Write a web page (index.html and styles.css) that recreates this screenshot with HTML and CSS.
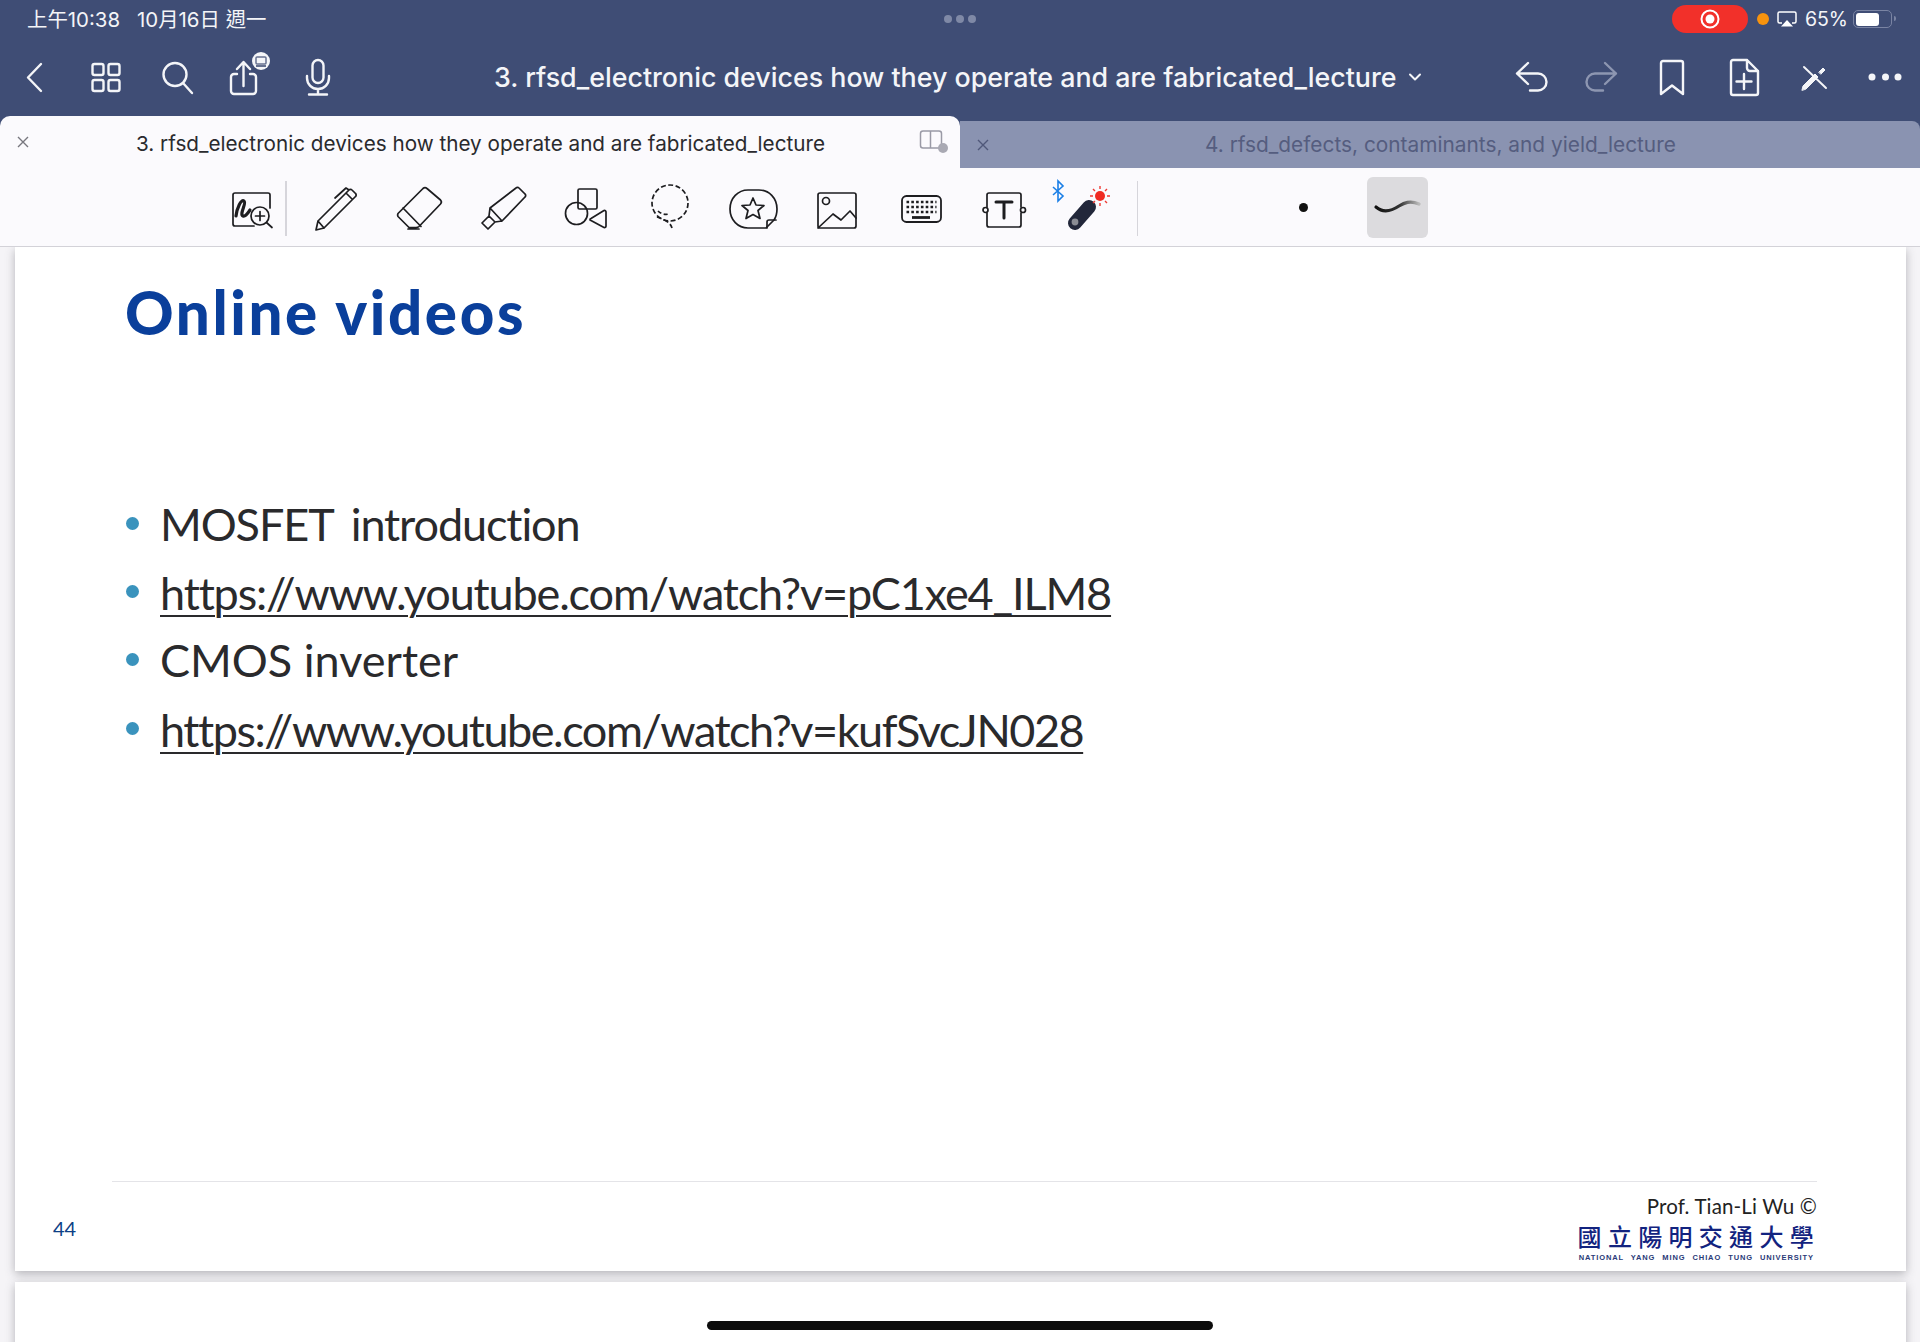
FILE: index.html
```html
<!DOCTYPE html>
<html lang="zh-Hant">
<head>
<meta charset="utf-8">
<title>rfsd lecture</title>
<link rel="stylesheet" href="styles.css">
</head>
<body>
<div class="app">
  <header class="top">
    <div class="status">
      <div class="status-time"><span>上午10:38</span><span>10月16日 週一</span></div>
      <div class="status-dots"><i></i><i></i><i></i></div>
      <div class="status-right">
        <div class="rec"><svg width="22" height="22" viewBox="0 0 22 22"><circle cx="11" cy="11" r="8.5" fill="none" stroke="#fff" stroke-width="2"/><circle cx="11" cy="11" r="4.5" fill="#fff"/></svg></div>
        <i class="orange"></i>
        <svg class="airplay" width="20" height="18" viewBox="0 0 20 18"><path d="M5 13H2.500A1.500 1.500 0 0 1 1 11.500V3.500A1.500 1.500 0 0 1 2.500 2h15A1.500 1.500 0 0 1 19 3.500v8a1.500 1.500 0 0 1-1.500 1.500H15" fill="none" stroke="#fff" stroke-width="1.500"/><path d="M10 10l6 6.500H4z" fill="#fff"/></svg>
        <span class="pct">65%</span>
        <div class="battery"><div class="battery-fill"></div></div>
      </div>
    </div>
    <nav class="nav">
      <div class="nav-left">
        <svg viewBox="0 0 40 40" class="ic"><path d="M27 7L14 20.500 27 34" /></svg>
        <svg viewBox="0 0 40 40" class="ic"><rect x="6.500" y="7" width="11" height="11" rx="2"/><rect x="22.500" y="7" width="11" height="11" rx="2"/><rect x="6.500" y="23" width="11" height="11" rx="2"/><rect x="22.500" y="23" width="11" height="11" rx="2"/></svg>
        <svg viewBox="0 0 40 40" class="ic"><circle cx="18" cy="17.500" r="11.500"/><path d="M26 26l9 10"/></svg>
        <svg viewBox="0 0 40 40" class="ic ic-share"><path d="M12 17H9a3 3 0 0 0-3 3v14a3 3 0 0 0 3 3h19a3 3 0 0 0 3-3V20a3 3 0 0 0-3-3h-3M18.500 29V7M12 12l6.500-7 6.500 7"/><circle cx="36" cy="4" r="9" fill="#f4f5f8" stroke="none"/><rect x="31" y="0" width="10" height="7" rx="1" fill="none" stroke="#65708f" stroke-width="1.500"/><rect x="31" y="8" width="10" height="2" fill="#65708f" stroke="none"/></svg>
        <svg viewBox="0 0 40 40" class="ic"><rect x="14.500" y="3" width="11" height="23" rx="5.500"/><path d="M9 19v2a11 11 0 0 0 22 0v-2M20 32v5M11 37.500h18"/></svg>
      </div>
      <div class="nav-title"><span>3. rfsd_electronic devices how they operate and are fabricated_lecture</span>
        <svg width="14" height="10" viewBox="0 0 14 10" class="chev"><path d="M2 2.500l5 5 5-5"/></svg>
      </div>
      <div class="nav-right">
        <svg viewBox="0 0 40 40" class="ic"><path d="M17 6L6 16.500 17 27M6 16.500h21a8.500 8.500 0 0 1 0 17h-8"/></svg>
        <svg viewBox="0 0 40 40" class="ic ic-dim"><path d="M23 6l11 10.500L23 27M34 16.500H13a8.500 8.500 0 0 0 0 17h8"/></svg>
        <svg viewBox="0 0 40 40" class="ic"><path d="M9 6a2 2 0 0 1 2-2h18a2 2 0 0 1 2 2v31l-11-8.500L9 37z"/></svg>
        <svg viewBox="0 0 40 40" class="ic"><path d="M8 5a2 2 0 0 1 2-2h14l11 11v22a2 2 0 0 1-2 2H10a2 2 0 0 1-2-2zM24 3v8a3 3 0 0 0 3 3h8M21 17v15M13.500 24.500h15"/></svg>
        <svg viewBox="0 0 40 40" class="ic ic-tools"><path d="M10 10l22 21" /><path d="M8 33l1-4 12-12 3 3-12 12z" class="ic-solid"/><path d="M25 15l4-4 2 2-4 4z" class="ic-solid"/></svg>
        <svg viewBox="0 0 40 40" class="ic ic-more"><circle cx="7" cy="20" r="3.500"/><circle cx="20.500" cy="20" r="3.500"/><circle cx="33" cy="20" r="3.500"/></svg>
      </div>
    </nav>
    <div class="tabs">
      <div class="tab tab-active">
        <svg class="tab-x" width="14" height="14" viewBox="0 0 14 14"><path d="M2 2l10 10M12 2L2 12"/></svg>
        <span class="tab-label">3. rfsd_electronic devices how they operate and are fabricated_lecture</span>
        <svg class="split" width="30" height="26" viewBox="0 0 30 26"><rect x="1.500" y="3" width="21" height="17" rx="2.500" fill="none" stroke="#9a9aa6" stroke-width="1.500"/><path d="M11.500 3v17" stroke="#9a9aa6" stroke-width="1.500"/><circle cx="24" cy="20" r="5" fill="#a9a9b3"/></svg>
      </div>
      <div class="tab tab-idle">
        <svg class="tab-x tab-x-idle" width="14" height="14" viewBox="0 0 14 14"><path d="M2 2l10 10M12 2L2 12"/></svg>
        <span class="tab-label">4. rfsd_defects, contaminants, and yield_lecture</span>
      </div>
    </div>
    <div class="toolbar">
      <svg class="tool" viewBox="0 0 50 50"><path d="M27 43H8a2 2 0 0 1-2-2V12a2 2 0 0 1 2-2h33a2 2 0 0 1 2 2v13"/><path d="M9 33c1-8 5-17 8-15 3 2-5 13-1 15 3 1 5-3 7-6" stroke-width="3.200"/><circle cx="33" cy="33" r="9"/><path d="M33 28.500v9M28.500 33h9M39.500 39.500l5.500 5"/></svg>
      <div class="vr"></div>
      <svg class="tool tool-pen" viewBox="0 0 50 50"><path d="M5 47l2-9L35 10l6.500 6.500L13 45zM7 38l6 7M35 10l3-3a2 2 0 0 1 3 0l3.500 3.500a2 2 0 0 1 0 3l-3 3M24 15l11-10 3 2"/></svg>
      <svg class="tool" viewBox="0 0 50 50"><path d="M29 5.500a3 3 0 0 1 4 0l13.500 11.500a3 3 0 0 1 0 4L25 43.500c-1 1-2 1-3 1H15L4 33.500a3 3 0 0 1 0-3zM9 25l18 18.500M14 46h11"/></svg>
      <svg class="tool" viewBox="0 0 50 50"><path d="M38 5a2 2 0 0 1 3 0l6 6a2 2 0 0 1 0 3L24 38l-7 1-6-6 1-8zM12 25l12 13M11 33l-7 7 6 6 7-7"/></svg>
      <svg class="tool" viewBox="0 0 50 50"><rect x="17" y="6" width="19" height="20" rx="1.500"/><circle cx="15.500" cy="30.500" r="11"/><path d="M43 27.500a1.500 1.500 0 0 1 2 1.500v14a1.500 1.500 0 0 1-2 1.500L30 37.500a1 1 0 0 1 0-2z"/></svg>
      <svg class="tool tool-dash" viewBox="0 0 50 50"><circle cx="25" cy="20" r="18" stroke-dasharray="5 2.500"/><path d="M13 28c3 3 7 4 11 3" stroke-dasharray="4 2.500"/><path d="M12 34c5 2 13 4 15 11" stroke-dasharray="5 2.500"/></svg>
      <svg class="tool" viewBox="0 0 50 50"><path d="M38 45H20C10 45 2 37 2 26S10 7 20 7h11c10 0 18 8 18 19 0 4-1 8-3 11l-8 8z"/><path d="M25 15l3 7 8 .5-6 5 2 8-7-4-7 4 2-8-6-5 8-.5z"/><path d="M48 37h-7a2 2 0 0 0-2 2v6"/></svg>
      <svg class="tool" viewBox="0 0 50 50"><rect x="6" y="10" width="38" height="35" rx="2"/><circle cx="14" cy="18" r="3.500"/><path d="M6 45l15-14 8 6 9-9 6 7"/></svg>
      <svg class="tool tool-dash" viewBox="0 0 50 50"><rect x="6" y="13" width="39" height="26" rx="4.500" stroke-width="1.800"/><path d="M10.500 19h30M10.500 24h30M10.500 29h30" stroke-width="2.600" stroke-dasharray="2.600 2.200"/><path d="M16 34.500h18" stroke-width="2.800"/></svg>
      <svg class="tool" viewBox="0 0 50 50"><path d="M8 24v-12a2 2 0 0 1 2-2h30a2 2 0 0 1 2 2v12M8 30v12a2 2 0 0 0 2 2h30a2 2 0 0 0 2-2V30"/><circle cx="6.500" cy="27" r="2.500"/><circle cx="44" cy="27" r="2.500"/><path d="M17 19h16M25 19v16" stroke-width="3"/></svg>
      <svg class="tool-laser" viewBox="0 0 62 50" width="62" height="50"><path d="M1 4l10 9-5 5V-2l5 5-10 9" fill="none" stroke="#1b7fe6" stroke-width="1.600"/><path d="M23 40l14-16" stroke="#22273a" stroke-width="14" stroke-linecap="round"/><circle cx="23" cy="39" r="3.400" fill="#8a8c94"/><circle cx="48" cy="13" r="5" fill="#f02a22"/><path d="M48 3v3M48 20v3M38 13h3M55 13h3M41 6l2 2M53 18l2 2M41 20l2-2M53 8l2-2" stroke="#ee3a33" stroke-width="1.400"/></svg>
      <div class="vr vr-2"></div>
      <i class="pen-dot"></i>
      <div class="brush"><svg width="61" height="61" viewBox="0 0 61 61"><defs><linearGradient id="brushFade" x1="0" x2="1" y1="0" y2="0"><stop offset="0" stop-color="#111"/><stop offset=".55" stop-color="#333"/><stop offset="1" stop-color="#bbb"/></linearGradient></defs><path d="M9 30c8 7 17 3 23-1 5-3 11-6 20-2" fill="none" stroke="url(#brushFade)" stroke-width="3.200" stroke-linecap="round"/></svg></div>
    </div>
  </header>
  <main class="doc">
    <section class="slide">
      <h1 class="slide-title">Online videos</h1>
      <ul class="bullets">
        <li class="plain-a">MOSFET introduction</li>
        <li><a class="link-a">https://www.youtube.com/watch?v=pC1xe4_ILM8</a></li>
        <li>CMOS inverter</li>
        <li><a class="link-b">https://www.youtube.com/watch?v=kufSvcJN028</a></li>
      </ul>
      <footer class="slide-foot">
        <div class="page-no">44</div>
        <div class="credit">
          <div class="prof">Prof. Tian-Li Wu ©</div>
          <div class="uni-zh">國立陽明交通大學</div>
          <div class="uni-en">NATIONAL YANG MING CHIAO TUNG UNIVERSITY</div>
        </div>
      </footer>
    </section>
    <section class="slide slide-next"></section>
  </main>
  <div class="home-bar"></div>
</div>
</body>
</html>
```
FILE: styles.css
```css
* { box-sizing: border-box; }
html, body { margin: 0; height: 100%; }
body { background: #f5f4f7; font-family: "Inter", "Noto Sans CJK TC", sans-serif; overflow: hidden; }
.app { position: relative; width: 1920px; height: 1342px; display: flex; flex-direction: column; overflow: hidden; }
.top { background: #3f4d75; flex: none; }

.status { height: 38px; display: grid; grid-template-columns: 1fr auto 1fr; align-items: center; color: #f4f5f8; font-size: 18px; padding: 0 24px 0 27px; }
.status-time { display: flex; gap: 17px; font-family: "Inter", "Noto Sans CJK TC", sans-serif; font-size: 20.400px; white-space: nowrap; margin-top: -2px; }
.status-dots { display: flex; gap: 4px; margin-left: -4px; }
.status-dots i { width: 8px; height: 8px; border-radius: 50%; background: #7f89a6; }
.status-right { display: flex; align-items: center; justify-content: flex-end; }
.rec { width: 76px; height: 28px; border-radius: 14px; background: #f2302a; display: flex; align-items: center; justify-content: center; }
.orange { width: 12px; height: 12px; border-radius: 50%; background: #f7930e; margin-left: 9px; }
.airplay { margin-left: 8px; }
.pct { margin-left: 8px; font-size: 19.500px; }
.battery { position: relative; margin-left: 5px; width: 39px; height: 18px; border: 1.500px solid #7a84a3; border-radius: 5px; padding: 1.500px; margin-right: 4px; }
.battery::after { content: ""; position: absolute; right: -5px; top: 5px; width: 2.500px; height: 5px; background: #7a84a3; border-radius: 0 2px 2px 0; }
.battery-fill { width: 23px; height: 100%; background: #fff; border-radius: 3px; }

.nav { height: 78px; display: flex; align-items: center; color: #fff; }
.nav-left { flex: none; width: 480px; padding-left: 14px; display: grid; grid-template-columns: 72px 71px 68px 73px 40px; }
.nav-right { flex: none; width: 409px; padding-right: 15px; display: grid; grid-template-columns: 71px 70px 71px 71px 71px 40px; justify-content: end; }
.ic { width: 40px; height: 40px; fill: none; stroke: #f4f5f8; stroke-width: 2.400; stroke-linecap: round; stroke-linejoin: round; overflow: visible; }
.ic-dim { stroke: #8d96b1; }
.ic-more { fill: #f4f5f8; stroke: none; }
.ic-tools { stroke-width: 2; }
.ic-solid { fill: #f4f5f8; stroke-width: 1; }
.nav-title { flex: 1; display: flex; align-items: center; padding-left: 14px; font-size: 26.800px; font-weight: 500; white-space: nowrap; color: #f4f5f8; }
.chev { margin-left: 11px; fill: none; stroke: #f4f5f8; stroke-width: 2; stroke-linecap: round; stroke-linejoin: round; }

.tabs { height: 52px; display: flex; align-items: flex-end; }
.tab { position: relative; width: 960px; display: flex; align-items: center; font-size: 20.700px; white-space: nowrap; }
.tab-active { height: 52px; background: #fbfafd; color: #2a2a2e; border-radius: 10px 10px 0 0; padding: 2px 0 0 136px; }
.tab-idle { height: 47px; background: #8a93b1; color: #555d7f; border-radius: 0 8px 0 0; padding-left: 245px; font-size: 20.850px; }
.tab-x { position: absolute; left: 16px; top: 50%; margin-top: -7px; fill: none; stroke: #77777e; stroke-width: 1.400; }
.tab-x-idle { left: 16px; stroke: #50587a; }
.split { position: absolute; left: 919px; top: 12px; }

.toolbar { height: 79px; background: #fbfafd; border-bottom: 1.500px solid #d3d2d8; display: flex; align-items: center; padding: 2px 0 0 227px; }
.tool { flex: none; width: 50px; height: 50px; margin-left: 33.600px; fill: none; stroke: #1d1d20; stroke-width: 1.700; stroke-linecap: round; stroke-linejoin: round; overflow: visible; }
.toolbar > .tool:first-child { margin-left: 0; }
.toolbar > .tool-pen { margin-left: 24px; }
.tool-dash { stroke-linecap: butt; }
.tool-laser { flex: none; margin-left: 22.400px; overflow: visible; }
.vr { flex: none; width: 1.500px; height: 55px; background: #d6d5db; margin-left: 8px; }
.vr-2 { margin-left: 23px; }
.pen-dot { flex: none; width: 9px; height: 9px; border-radius: 50%; background: #111; margin: -2px 0 0 160.500px; }
.brush { flex: none; width: 61px; height: 61px; margin: -2px 0 0 59px; border-radius: 6px; background: #dcdbde; }

.doc { flex: 1; min-height: 0; padding: 0 14px 0 15px; overflow: hidden; }
.slide { height: 1024px; background: #fff; box-shadow: 0 3px 9px rgba(60, 60, 70, .35); display: flex; flex-direction: column; font-family: "Lato", sans-serif; font-variant-ligatures: none; }
.slide-next { margin-top: 11px; }
.slide-title { margin: 30px 0 0 110px; font-size: 60px; line-height: 70px; font-weight: 900; letter-spacing: 2.600px; color: #0a3f9b; }
.bullets { list-style: none; margin: 143px 0 0 0; padding: 0 0 0 145px; font-size: 45px; color: #2a2a2c; }
.bullets li { position: relative; height: 68.200px; line-height: 68px; white-space: nowrap; }
.bullets li::before { content: ""; position: absolute; left: -34px; top: 27px; width: 13px; height: 13px; border-radius: 50%; background: #3a93bd; }
.plain-a { letter-spacing: -1.100px; word-spacing: 8px; }
.bullets a { text-decoration: underline; text-decoration-thickness: 2px; text-underline-offset: 5px; color: #2a2a2c; position: relative; top: 1px; }
.bullets .link-a { letter-spacing: -1.150px; }
.bullets .link-b { letter-spacing: -1.470px; }
.slide-foot { margin: auto 89px 0 97px; height: 90px; border-top: 1.500px solid #e4e4e8; display: flex; justify-content: space-between; position: relative; }
.page-no { position: absolute; left: -59px; top: 34px; font-size: 20px; color: #0d3f86; }
.credit { margin-left: auto; text-align: right; padding-top: 12px; color: #222; }
.prof { font-size: 20.500px; line-height: 24px; letter-spacing: .15px; white-space: nowrap; }
.uni-zh { font-family: "Noto Sans CJK TC", sans-serif; font-size: 24px; line-height: 28px; letter-spacing: 6.300px; margin: 4px -3px 0 0; color: #12237f; font-weight: 500; white-space: nowrap; }
.uni-en { font-family: "Liberation Sans", sans-serif; font-size: 7.500px; line-height: 10px; letter-spacing: .9px; word-spacing: 4px; margin: 3px 3px 0 0; font-weight: 700; color: #2a3a78; white-space: nowrap; }

.home-bar { position: absolute; left: 707px; top: 1321px; width: 506px; height: 9px; border-radius: 5px; background: #0c0c0c; }
```
